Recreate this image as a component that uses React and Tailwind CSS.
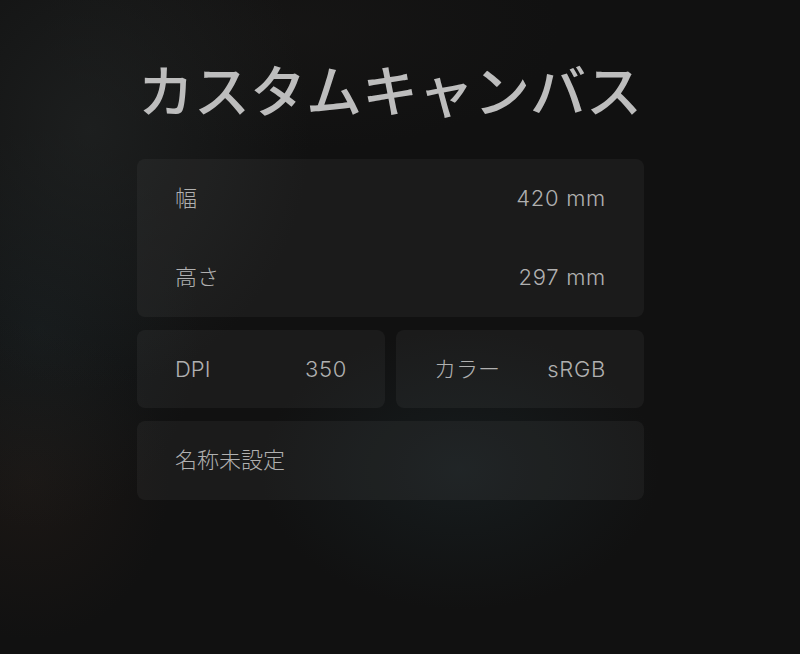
import React from "react";

const font = { fontFamily: 'Inter, "Noto Sans CJK JP", "Noto Sans", sans-serif' };
const titleFont = { fontFamily: '"Noto Sans CJK JP", "Noto Sans", sans-serif' };

const txt = "text-[22px] font-light text-[#b0b0b0]";
const val = "text-[22px] font-light tracking-[0.7px] text-[#b0b0b0]";

function Row({ label, value }) {
  return (
    <div className="flex h-[79px] items-center justify-between px-[38px]">
      <span className={txt}>{label}</span>
      <span className={val}>{value}</span>
    </div>
  );
}

export default function App() {
  return (
    <div
      style={font}
      className="relative h-[654px] w-[800px] overflow-hidden bg-[#111111] bg-[radial-gradient(ellipse_220px_260px_at_90px_130px,rgba(40,44,44,0.5),transparent),radial-gradient(ellipse_160px_200px_at_40px_330px,rgba(30,42,46,0.35),transparent),radial-gradient(ellipse_140px_160px_at_30px_480px,rgba(50,36,28,0.3),transparent),radial-gradient(ellipse_200px_140px_at_460px_470px,rgba(30,44,48,0.4),transparent),radial-gradient(ellipse_260px_120px_at_300px_30px,rgba(32,30,28,0.3),transparent)]"
    >
      <div className="ml-[137px] w-[507px] pt-[58px]">
        <h1
          style={titleFont}
          className="pl-[1px] text-[56px] font-medium leading-[60px] text-[#bdbdbd]"
        >
          カスタムキャンバス
        </h1>
        <div className="mt-[41px] flex flex-col gap-[13px]">
          <div className="rounded-lg bg-white/[0.045]">
            <Row label="幅" value="420 mm" />
            <Row label="高さ" value="297 mm" />
          </div>
          <div className="grid grid-cols-2 gap-[11px]">
            <div className="flex h-[78px] items-center justify-between rounded-lg bg-white/[0.045] px-[38px]">
              <span className={txt}>DPI</span>
              <span className={val}>350</span>
            </div>
            <div className="flex h-[78px] items-center justify-between rounded-lg bg-white/[0.045] px-[38px]">
              <span className={txt}>カラー</span>
              <span className={val}>sRGB</span>
            </div>
          </div>
          <div className="flex h-[79px] items-center rounded-lg bg-white/[0.045] px-[38px]">
            <span className={txt}>名称未設定</span>
          </div>
        </div>
      </div>
    </div>
  );
}
